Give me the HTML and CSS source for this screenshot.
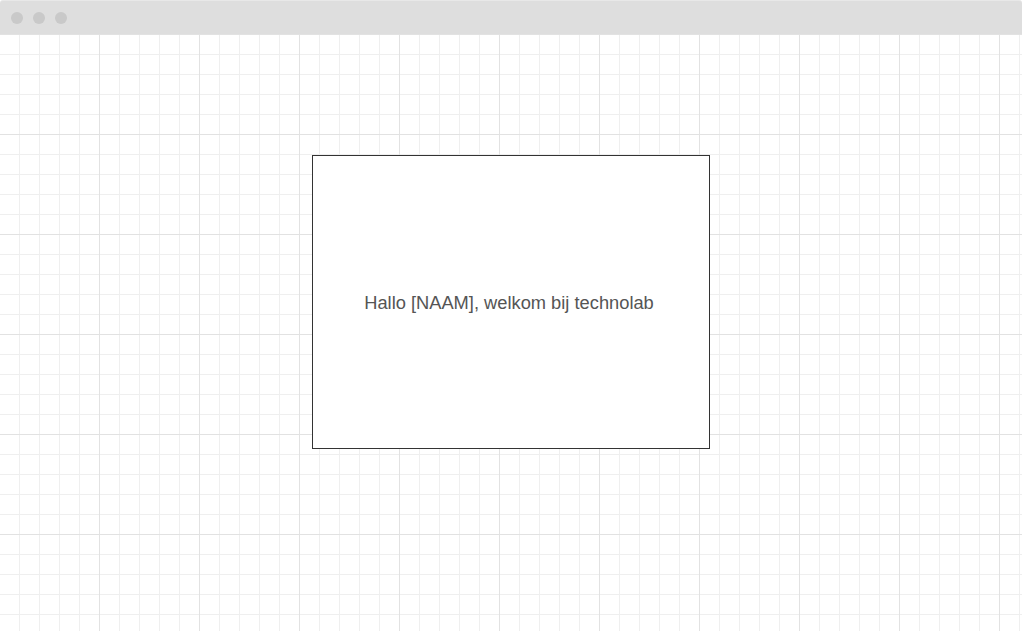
FILE: index.html
```html
<!DOCTYPE html>
<html lang="nl">
<head>
<meta charset="utf-8">
<title>Technolab</title>
<link rel="stylesheet" href="styles.css">
</head>
<body>
<div class="window">
  <div class="titlebar">
    <span class="dot"></span>
    <span class="dot"></span>
    <span class="dot"></span>
  </div>
  <div class="canvas">
    <div class="card">
      <p class="greeting">Hallo [NAAM], welkom bij technolab</p>
    </div>
  </div>
</div>
</body>
</html>
```
FILE: styles.css
```css
html, body {
  margin: 0;
  padding: 0;
  height: 100%;
  background: #ffffff;
  font-family: "Liberation Sans", Arial, sans-serif;
}

.window {
  display: flex;
  flex-direction: column;
  height: 100%;
}

.titlebar {
  height: 34px;
  flex: 0 0 34px;
  background: #dedede;
  border-top: 1px solid #e8e8e8;
  box-sizing: border-box;
  border-radius: 3px 3px 0 0;
  display: flex;
  align-items: center;
  gap: 10px;
  padding-left: 11px;
}

.dot {
  width: 12px;
  height: 12px;
  border-radius: 50%;
  background: #c9c9c9;
}

.canvas {
  flex: 1;
  display: flex;
  justify-content: center;
  align-items: flex-start;
  padding-top: 121px;
  background-color: #ffffff;
  background-image:
    linear-gradient(to right, transparent 99px, #e2e2e2 99px, #e2e2e2 100px, transparent 100px),
    linear-gradient(to bottom, #e2e2e2 0, #e2e2e2 1px, transparent 1px),
    linear-gradient(to right, transparent 19px, #efefef 19px, #efefef 20px, transparent 20px),
    linear-gradient(to bottom, #efefef 0, #efefef 1px, transparent 1px);
  background-size: 100px 100px, 100px 100px, 20px 20px, 20px 20px;
}

.card {
  width: 398px;
  height: 294px;
  box-sizing: border-box;
  background: #ffffff;
  border: 1px solid #333333;
  display: flex;
  align-items: center;
  justify-content: center;
  padding: 1px 4px 0 0;
}

.greeting {
  margin: 0;
  font-size: 18.3px;
  color: #555555;
}
```
